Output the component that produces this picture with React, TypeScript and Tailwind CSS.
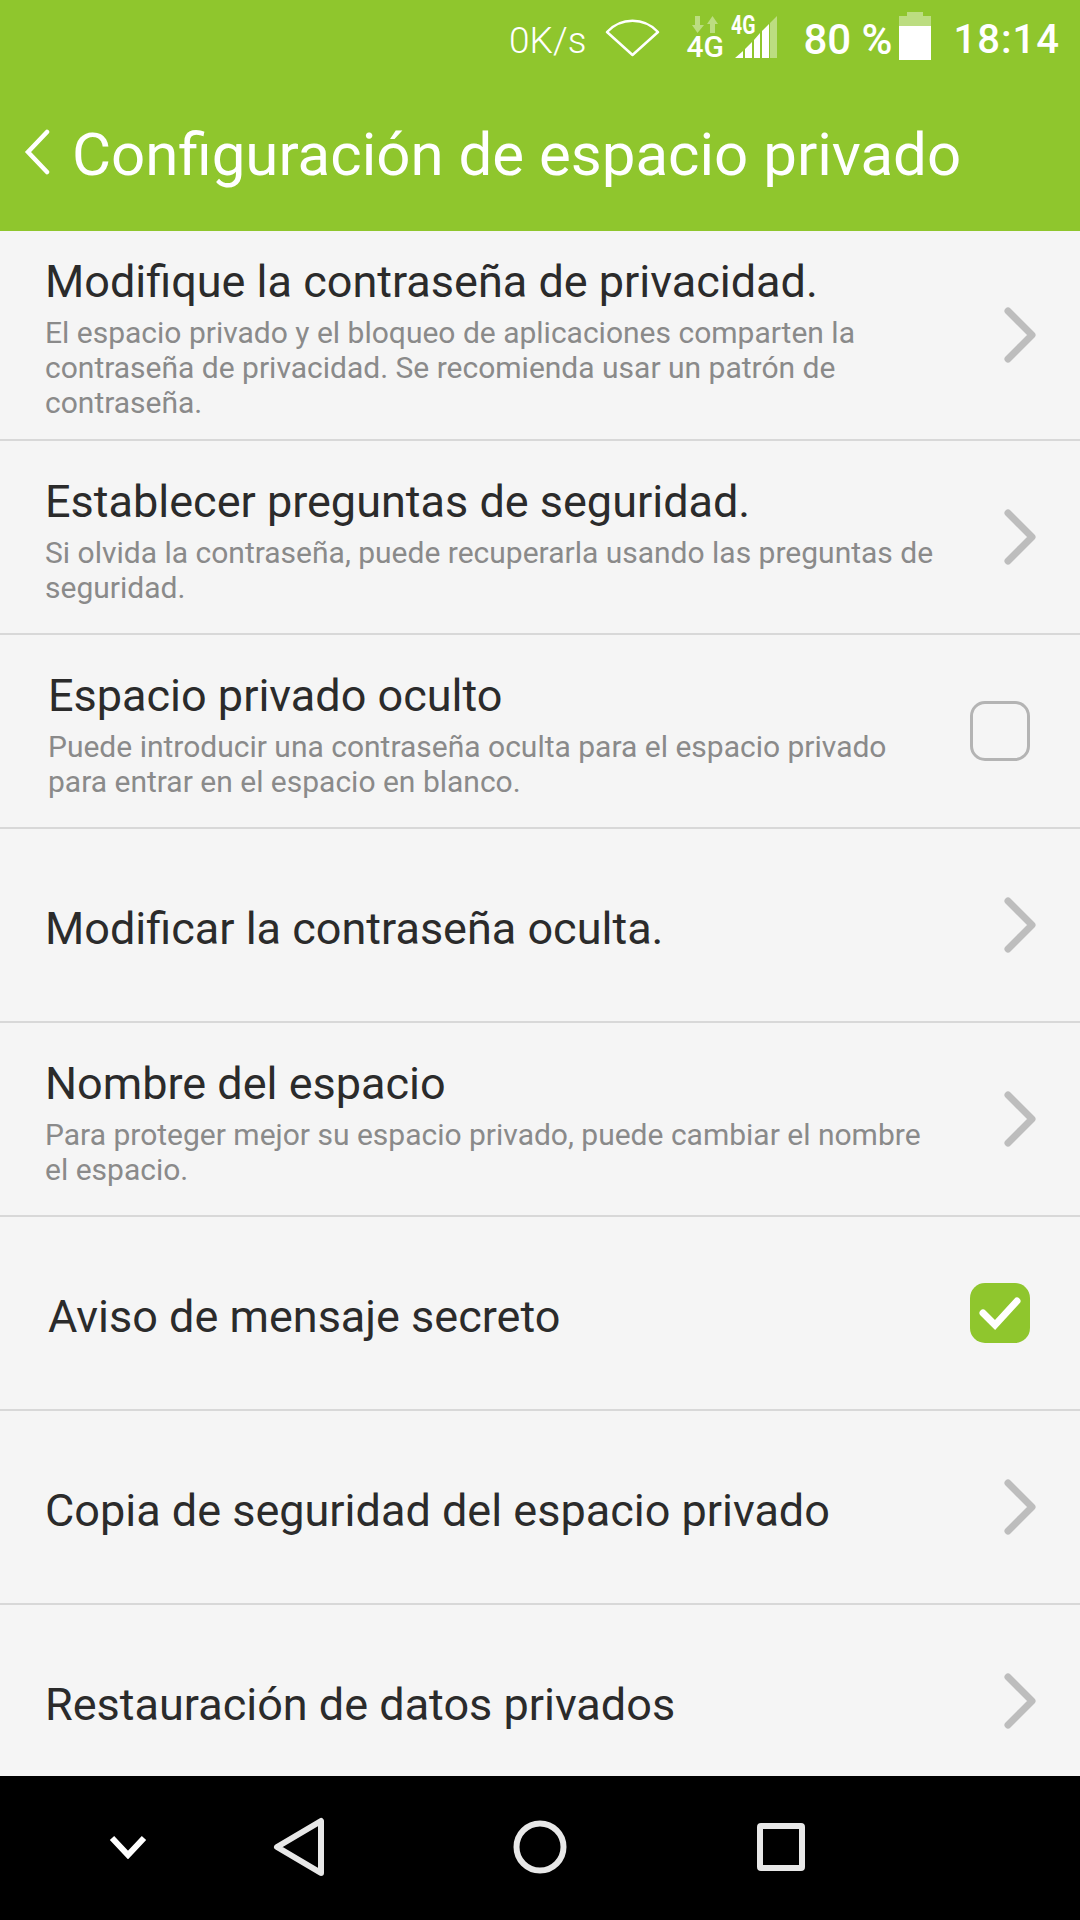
const rows = [
  {
    title: 'Modifique la contraseña de privacidad.',
    sub: 'El espacio privado y el bloqueo de aplicaciones comparten la contraseña de privacidad. Se recomienda usar un patrón de contraseña.',
    kind: 'chevron',
  },
  {
    title: 'Establecer preguntas de seguridad.',
    sub: 'Si olvida la contraseña, puede recuperarla usando las preguntas de seguridad.',
    kind: 'chevron',
  },
  {
    title: 'Espacio privado oculto',
    sub: 'Puede introducir una contraseña oculta para el espacio privado para entrar en el espacio en blanco.',
    kind: 'off',
  },
  { title: 'Modificar la contraseña oculta.', kind: 'chevron' },
  {
    title: 'Nombre del espacio',
    sub: 'Para proteger mejor su espacio privado, puede cambiar el nombre el espacio.',
    kind: 'chevron',
  },
  { title: 'Aviso de mensaje secreto', kind: 'on' },
  { title: 'Copia de seguridad del espacio privado', kind: 'chevron' },
  { title: 'Restauración de datos privados', kind: 'chevron' },
];

function Chevron() {
  return (
    <svg width="36" height="60" viewBox="0 0 36 60" className="mr-[42px] shrink-0">
      <path d="M6 6 L30 30 L6 54" fill="none" stroke="#bdbdbd" strokeWidth="7" strokeLinecap="round" strokeLinejoin="round" />
    </svg>
  );
}

function Checkbox({ checked }: { checked: boolean }) {
  if (checked) {
    return (
      <div className="mr-[50px] flex h-[60px] w-[60px] shrink-0 items-center justify-center rounded-[15px] bg-[#8fc62d]">
        <svg width="44" height="36" viewBox="0 0 44 36">
          <path d="M5 18 L17 30 L39 6" fill="none" stroke="#ffffff" strokeWidth="7" strokeLinecap="round" />
        </svg>
      </div>
    );
  }
  return <div className="mr-[50px] h-[60px] w-[60px] shrink-0 rounded-[15px] border-[3px] border-[#b4b4b4]" />;
}

function NetworkIcons() {
  return (
    <div className="relative ml-[25px] h-[48px] w-[94px] shrink-0">
      <svg width="94" height="48" viewBox="0 0 94 48" className="absolute left-0 top-0">
        <path d="M10 1h5v9h4l-6.500 8L7 10h3z" fill="#ffffff" fillOpacity="0.4" />
        <path d="M25 18h5V9h3l-5.500-8L22 9h3z" fill="#ffffff" fillOpacity="0.4" />
        <path d="M50 43l8-7v7z M60 34l7-7v16h-7z M69 25l6-7v25h-6z M77 16l7-7v34h-7z" fill="#ffffff" />
        <path d="M85 8l7-7v42h-7z" fill="#ffffff" fillOpacity="0.4" />
      </svg>
      <span className="absolute left-[1px] top-[17px] text-[30px] font-medium leading-none">4G</span>
      <span className="absolute left-[46px] top-[-2px] origin-left scale-x-[0.78] text-[25px] font-bold leading-none">4G</span>
    </div>
  );
}

export default function App() {
  return (
    <div className="flex h-[1920px] w-[1080px] flex-col overflow-hidden bg-[#f5f5f5] font-['Roboto',sans-serif]">
      <div className="h-[231px] shrink-0 bg-[#8fc62d] text-white">
        <div className="flex h-[78px] items-center justify-end">
          <span className="mt-[2px] text-[37px] font-light leading-none">0K/s</span>
          <svg width="55" height="40" viewBox="0 0 55 40" className="ml-[19px] mb-[3px]">
            <path d="M2 14 C16 -1 39 -1 53 14 L27.500 37 Z" fill="none" stroke="#ffffff" strokeWidth="2.5" strokeLinejoin="round" />
          </svg>
          <NetworkIcons />
          <span className="ml-[24px] mt-[2px] text-[42px] font-medium leading-none">80 %</span>
          <svg width="32" height="48" viewBox="0 0 32 48" className="mb-[6px] ml-[6px]">
            <path d="M8 0h16v4h8v10H0V4h8z" fill="#ffffff" fillOpacity="0.4" />
            <path d="M0 14h32v34H0z" fill="#ffffff" />
          </svg>
          <span className="ml-[23px] mr-[20px] mt-[2px] text-[40px] font-medium leading-none tracking-[1px]">18:14</span>
        </div>
        <div className="flex h-[153px] items-center">
          <svg width="26" height="46" viewBox="0 0 26 46" className="mb-[6px] ml-[24px] shrink-0">
            <path d="M23 3 L4 23 L23 43" fill="none" stroke="#ffffff" strokeWidth="4.5" strokeLinecap="round" />
          </svg>
          <h1 className="ml-[22px] whitespace-nowrap text-[60px] font-normal leading-none">Configuración de espacio privado</h1>
        </div>
      </div>

      <div className="flex-1 overflow-hidden">
        {rows.map((row, i) => (
          <div
            key={row.title}
            className={`flex items-center justify-between border-b-2 border-[#d8d8d8] ${i === 0 ? 'h-[210px]' : 'h-[194px]'}`}
          >
            <div className={row.kind === 'chevron' ? 'w-[950px] pl-[45px] pt-[7px]' : 'w-[940px] pl-[48px] pt-[7px]'}>
              <div className="whitespace-nowrap text-[45px] leading-[50px] text-[#2b2b2b]">{row.title}</div>
              {row.sub && <div className="pt-[8px] text-[30px] leading-[35px] text-[#8a8a8a]">{row.sub}</div>}
            </div>
            {row.kind === 'chevron' && <Chevron />}
            {row.kind === 'off' && <Checkbox checked={false} />}
            {row.kind === 'on' && <Checkbox checked />}
          </div>
        ))}
      </div>

      <div className="flex h-[144px] shrink-0 items-center bg-black pb-[2px]">
        <svg width="40" height="24" viewBox="0 0 40 24" className="ml-[108px]">
          <path d="M4 3 L20 20 L36 3" fill="none" stroke="#ffffff" strokeWidth="6" />
        </svg>
        <svg width="52" height="60" viewBox="0 0 52 60" className="ml-[125px]">
          <path d="M48 4 L48 56 L4 30 Z" fill="none" stroke="#e8e8e8" strokeWidth="6" strokeLinejoin="round" />
        </svg>
        <svg width="54" height="54" viewBox="0 0 54 54" className="ml-[188px]">
          <circle cx="27" cy="27" r="23.5" fill="none" stroke="#e8e8e8" strokeWidth="6" />
        </svg>
        <svg width="48" height="48" viewBox="0 0 48 48" className="ml-[190px]">
          <rect x="3" y="3" width="42" height="42" rx="1" fill="none" stroke="#e8e8e8" strokeWidth="6" />
        </svg>
      </div>
    </div>
  );
}
